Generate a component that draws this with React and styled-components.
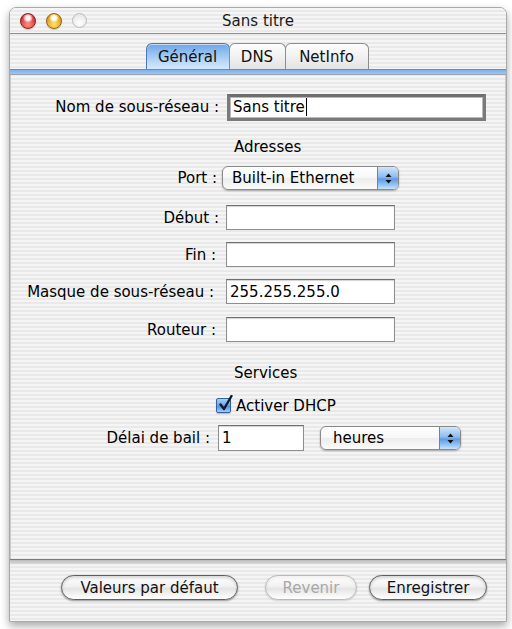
import React from 'react';
import styled, { createGlobalStyle } from 'styled-components';

const Global = createGlobalStyle`
  html, body { margin: 0; padding: 0; background: #ffffff; }
  body { font-family: "DejaVu Sans", "Liberation Sans", sans-serif; color: #000; }
  * { box-sizing: border-box; }
`;

const pinstripe = `repeating-linear-gradient(to bottom, #f5f5f5 0px, #f5f5f5 2px, #e9e9e9 2px, #e9e9e9 4px)`;

const Page = styled.div`
  width: 512px;
  height: 629px;
  padding: 7px 0 0 9px;
  overflow: hidden;
`;

const Window = styled.div`
  width: 498px;
  height: 615px;
  display: flex;
  flex-direction: column;
  border-radius: 7px 7px 0 0;
  border: 1px solid #a9a9a9;
  box-shadow: 0 4px 9px rgba(0, 0, 0, 0.35);
  background: ${pinstripe};
  overflow: hidden;
`;

const TitleBar = styled.div`
  height: 26px;
  flex: none;
  display: grid;
  grid-template-columns: 1fr auto 1fr;
  align-items: center;
  border-bottom: 1px solid #8f8f8f;
  background: ${pinstripe};
`;

const Lights = styled.div`
  display: flex;
  gap: 10px;
  padding-left: 10px;
  align-items: center;
`;

const Light = styled.span`
  width: 16px;
  height: 16px;
  border-radius: 50%;
  border: 1px solid ${p => p.$edge};
  background:
    radial-gradient(circle at 50% 28%, rgba(255,255,255,0.95) 0 18%, rgba(255,255,255,0) 42%),
    radial-gradient(circle at 50% 75%, ${p => p.$light} 0%, ${p => p.$base} 70%);
  box-shadow: 0 1px 1px rgba(0, 0, 0, 0.2);
`;

const GhostLight = styled.span`
  width: 15px;
  height: 15px;
  border-radius: 50%;
  border: 1px solid #b9b9b9;
  background: radial-gradient(circle at 50% 70%, #ffffff 0%, #e6e6e6 80%);
`;

const Title = styled.div`
  font-size: 15px;
  color: #1a1a1a;
  padding-top: 1px;
`;

const TabStrip = styled.div`
  flex: none;
  height: 35px;
  padding-top: 9px;
  display: flex;
  justify-content: center;
  padding-right: 1px;
`;

const Tab = styled.div`
  width: ${p => p.$w}px;
  height: 26px;
  margin-left: -1px;
  display: flex;
  align-items: center;
  justify-content: center;
  font-size: 15px;
  border-radius: 6px 6px 0 0;
  border: 1px solid ${p => (p.$active ? '#4c79b6' : '#8d8d8d')};
  border-bottom: none;
  color: #111;
  background: ${p =>
    p.$active
      ? 'linear-gradient(to bottom, #6ea3e6 0%, #93c0f1 35%, #b9d8f8 70%, #d4e8fc 100%)'
      : 'linear-gradient(to bottom, #fdfdfd 0%, #f1f1f1 50%, #e3e3e3 100%)'};
  box-shadow: inset 0 1px 0 rgba(255, 255, 255, 0.6);
`;

const Band = styled.div`
  flex: none;
  height: 6px;
  border-top: 1px solid #5f8ed0;
  border-bottom: 1px solid #9aa3b0;
  background: linear-gradient(to bottom, #7fb0ea, #9cc6f3);
`;

const Content = styled.div`
  flex: 1;
  display: flex;
  flex-direction: column;
  padding-top: 19px;
  border-left: 1px solid #c9c9c9;
  border-right: 1px solid #c9c9c9;
`;

const Row = styled.div`
  display: flex;
  align-items: center;
  height: ${p => p.$h}px;
  margin-top: ${p => p.$mt}px;
`;

const Label = styled.div`
  width: ${p => p.$w}px;
  flex: none;
  text-align: right;
  font-size: 15px;
  padding-right: ${p => p.$gap}px;
  white-space: nowrap;
`;

const Heading = styled.div`
  font-size: 15px;
  height: 18px;
  line-height: 18px;
  margin-top: ${p => p.$mt}px;
  padding-left: 223px;
`;

const Field = styled.div`
  width: ${p => p.$w}px;
  height: ${p => p.$h}px;
  background: #ffffff;
  border: ${p => (p.$focus ? '3px solid #7a7a7a' : '1px solid #8e8e8e')};
  border-top-color: ${p => (p.$focus ? '#6e6e6e' : '#6f6f6f')};
  box-shadow: ${p => (p.$focus ? 'inset 0 0 0 1px #b9b9b9' : 'inset 0 1px 1px rgba(0,0,0,0.18)')};
  display: flex;
  align-items: center;
  padding-left: 3px;
  font-size: 15px;
  white-space: nowrap;
`;

const Caret = styled.span`
  display: inline-block;
  width: 1px;
  height: 18px;
  background: #000;
  margin-left: 1px;
`;

const Popup = styled.div`
  width: ${p => p.$w}px;
  height: 24px;
  margin-left: ${p => p.$ml || 0}px;
  display: flex;
  border: 1px solid #8a8a8a;
  border-radius: 6px;
  overflow: hidden;
  background: linear-gradient(to bottom, #ffffff 0%, #f7f7f7 50%, #ececec 51%, #fbfbfb 100%);
  box-shadow: 0 1px 2px rgba(0, 0, 0, 0.3);
`;

const PopupText = styled.div`
  flex: 1;
  display: flex;
  align-items: center;
  padding-left: ${p => p.$pl}px;
  font-size: 15px;
  white-space: nowrap;
`;

const PopupArrows = styled.div`
  width: 21px;
  flex: none;
  display: flex;
  align-items: center;
  justify-content: center;
  border-left: 1px solid #5f86be;
  background: linear-gradient(to bottom, #d2e5fa 0%, #8ebcf0 45%, #5e9ae6 55%, #9ccaf8 85%, #c9e3fc 100%);
`;

const CheckRow = styled.div`
  display: flex;
  align-items: center;
  height: 17px;
  margin-top: ${p => p.$mt}px;
  padding-left: 205px;
  gap: 5px;
  font-size: 15px;
`;

const CheckBox = styled.span`
  position: relative;
  width: 15px;
  height: 15px;
  border: 1px solid #34609f;
  border-radius: 2px;
  background: linear-gradient(to bottom, #a8cdf6 0%, #6aa5ea 50%, #4e8fe0 55%, #a0d0fb 100%);
  box-shadow: 0 1px 1px rgba(0, 0, 0, 0.25);
`;

const CheckMark = styled.svg`
  position: absolute;
  left: 1px;
  top: -4px;
`;

const Separator = styled.div`
  flex: none;
  height: 6px;
  border-top: 1px solid #7a7a7a;
  background: linear-gradient(to bottom, rgba(0,0,0,0.25), rgba(0,0,0,0));
`;

const ButtonBar = styled.div`
  flex: none;
  height: 56px;
  display: flex;
  justify-content: flex-end;
  padding: 10px 19px 0 0;
  gap: 12px;
`;

const Button = styled.div`
  width: ${p => p.$w}px;
  height: 25px;
  margin-right: ${p => p.$mr || 0}px;
  border-radius: 13px;
  border: 1px solid ${p => (p.$disabled ? '#b8b8b8' : '#5f5f5f')};
  background: linear-gradient(to bottom, #ffffff 0%, #f1f1f1 45%, #e4e4e4 55%, #ffffff 100%);
  box-shadow: ${p =>
    p.$disabled
      ? 'inset 0 2px 3px rgba(0,0,0,0.06), 0 1px 2px rgba(0,0,0,0.15)'
      : 'inset 0 2px 3px rgba(0,0,0,0.16), 0 1px 2px rgba(0,0,0,0.4)'};
  display: flex;
  align-items: center;
  justify-content: center;
  font-size: 15px;
  color: ${p => (p.$disabled ? '#a8a8a8' : '#111')};
`;

const Arrows = () => (
  <svg width="7" height="11" viewBox="0 0 7 11">
    <path d="M3.5 0.5 L6.5 4 L0.5 4 Z" fill="#111" />
    <path d="M0.5 7 L6.5 7 L3.5 10.5 Z" fill="#111" />
  </svg>
);

export default function App() {
  return (
    <>
      <Global />
      <Page>
        <Window>
          <TitleBar>
            <Lights>
              <Light $edge="#8b1d1d" $base="#d3312f" $light="#ff8f86" />
              <Light $edge="#8f6210" $base="#e09a12" $light="#ffe36a" />
              <GhostLight />
            </Lights>
            <Title>Sans titre</Title>
            <div />
          </TitleBar>
          <TabStrip>
            <Tab $w={84} $active>Général</Tab>
            <Tab $w={57}>DNS</Tab>
            <Tab $w={84}>NetInfo</Tab>
          </TabStrip>
          <Band />
          <Content>
            <Row $h={26} $mt={0}>
              <Label $w={216} $gap={8}>Nom de sous-réseau :</Label>
              <Field $w={259} $h={27} $focus>Sans titre<Caret /></Field>
            </Row>
            <Heading $mt={18}>Adresses</Heading>
            <Row $h={26} $mt={9}>
              <Label $w={211} $gap={5}>Port :</Label>
              <Popup $w={177}>
                <PopupText $pl={9}>Built-in Ethernet</PopupText>
                <PopupArrows><Arrows /></PopupArrows>
              </Popup>
            </Row>
            <Row $h={25} $mt={14}>
              <Label $w={215} $gap={7}>Début :</Label>
              <Field $w={169} $h={25}></Field>
            </Row>
            <Row $h={25} $mt={12}>
              <Label $w={215} $gap={10}>Fin :</Label>
              <Field $w={169} $h={25}></Field>
            </Row>
            <Row $h={25} $mt={12}>
              <Label $w={215} $gap={12}>Masque de sous-réseau :</Label>
              <Field $w={169} $h={25}>255.255.255.0</Field>
            </Row>
            <Row $h={25} $mt={13}>
              <Label $w={215} $gap={10}>Routeur :</Label>
              <Field $w={169} $h={25}></Field>
            </Row>
            <Heading $mt={22}>Services</Heading>
            <CheckRow $mt={15}>
              <CheckBox>
                <CheckMark width="16" height="17" viewBox="0 0 16 17">
                  <path d="M2.5 9.5 L6 14 L13.5 1" fill="none" stroke="#101a2a" strokeWidth="2.4" strokeLinecap="round" strokeLinejoin="round" />
                </CheckMark>
              </CheckBox>
              Activer DHCP
            </CheckRow>
            <Row $h={26} $mt={11}>
              <Label $w={207} $gap={8}>Délai de bail :</Label>
              <Field $w={86} $h={26}>1</Field>
              <Popup $w={141} $ml={16}>
                <PopupText $pl={12}>heures</PopupText>
                <PopupArrows><Arrows /></PopupArrows>
              </Popup>
            </Row>
          </Content>
          <Separator />
          <ButtonBar>
            <Button $w={177} $mr={15}>Valeurs par défaut</Button>
            <Button $w={92} $disabled>Revenir</Button>
            <Button $w={118}>Enregistrer</Button>
          </ButtonBar>
        </Window>
      </Page>
    </>
  );
}
